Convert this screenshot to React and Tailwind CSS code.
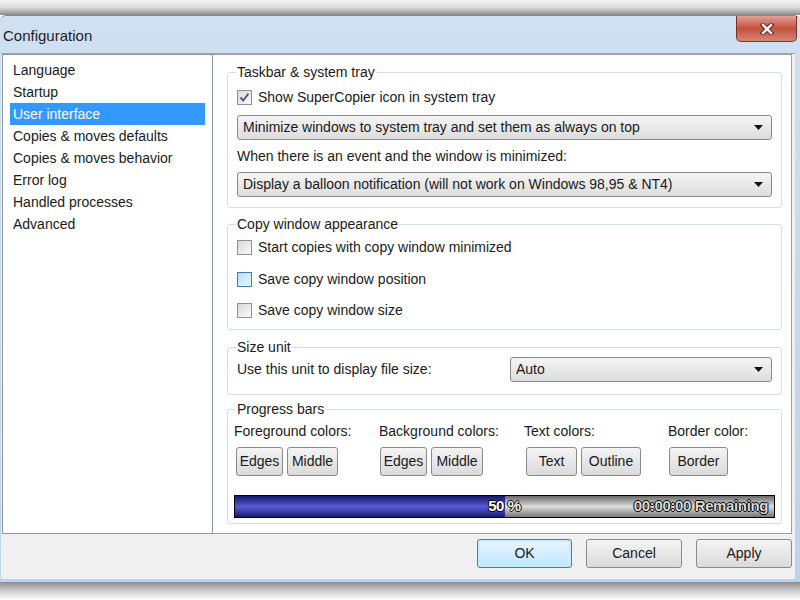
import React from 'react';

const menu = [
  'Language',
  'Startup',
  'User interface',
  'Copies & moves defaults',
  'Copies & moves behavior',
  'Error log',
  'Handled processes',
  'Advanced',
];

const outlineDark = '[text-shadow:-1px_0_#000,1px_0_#000,0_-1px_#000,0_1px_#000]';

function CheckBox({ checked, hover }) {
  const box = hover
    ? 'border-[#3c7fb1] bg-linear-to-br from-[#b9def5] to-[#eaf6fd]'
    : 'border-[#8e8f8f] bg-linear-to-br from-[#d8d8d8] to-[#fbfbfb]';
  return (
    <span className={`w-[15px] h-[15px] border flex items-center justify-center shrink-0 ${box}`}>
      {checked && (
        <svg width="11" height="11" viewBox="0 0 11 11">
          <path d="M1.5 5.5 L4.2 8.5 L9.5 1.5" fill="none" stroke="#4d5b8c" strokeWidth="2" />
        </svg>
      )}
    </span>
  );
}

function Check({ label, checked, hover, className = '' }) {
  return (
    <div className={`flex items-center gap-[6px] h-[20px] ${className}`}>
      <CheckBox checked={checked} hover={hover} />
      <span>{label}</span>
    </div>
  );
}

function Select({ value, className = '' }) {
  return (
    <div
      className={`flex items-center justify-between h-[25px] border border-[#8a8a8a] rounded-[3px] bg-linear-to-b from-[#f5f5f5] to-[#dddddd] pl-[5px] pr-[8px] ${className}`}
    >
      <span className="truncate">{value}</span>
      <svg width="9" height="5" viewBox="0 0 9 5" className="shrink-0">
        <path d="M0 0 H9 L4.5 5 Z" fill="#111" />
      </svg>
    </div>
  );
}

function Btn({ children, className = '' }) {
  return (
    <button
      className={`h-[29px] border border-[#8a8a8a] rounded-[3px] bg-linear-to-b from-[#f4f4f4] to-[#dadada] text-[14px] text-[#1a1a1a] ${className}`}
    >
      {children}
    </button>
  );
}

function Group({ title, className = '', legend = '-ml-[1px]', children }) {
  return (
    <fieldset className={`border border-[#d6dde2] rounded-[3px] ml-[14px] mr-[9px] ${className}`}>
      <legend className={`px-[1px] leading-[16px] ${legend}`}>{title}</legend>
      {children}
    </fieldset>
  );
}

export default function App() {
  return (
    <div className="w-[800px] h-[600px] bg-white flex flex-col overflow-hidden font-['Liberation_Sans',Arial,sans-serif] text-[14px] text-[#1a1a1a]">
      <div className="h-[15px] bg-linear-to-b from-[#f6f6f6] via-[#dcdcdc] to-[#8c8c8c]" />

      <div className="h-[567px] flex flex-col bg-linear-to-b from-[#cfe0f2] to-[#bcd3ea] border-t border-[#7c8a99] rounded-t-[6px]">
        {/* title bar */}
        <div className="h-[37px] relative">
          <span className="absolute left-[3px] top-[9px] text-[15px] text-[#1e1e1e]">Configuration</span>
          <div className="absolute right-[3px] top-0 w-[61px] h-[26px] rounded-b-[5px] border border-[#7a3129] border-t-0 bg-linear-to-b from-[#e2a195] via-[#c5503f] to-[#d68676] flex items-center justify-center">
            <svg width="14" height="12" viewBox="0 0 14 12">
              <path d="M3 2 L11 10 M11 2 L3 10" stroke="#5a241c" strokeWidth="4.5" strokeLinecap="square" />
              <path d="M3 2 L11 10 M11 2 L3 10" stroke="#f4f0ee" strokeWidth="2.5" strokeLinecap="square" />
            </svg>
          </div>
        </div>

        {/* client area */}
        <div className="h-[526px] ml-[1px] mr-[5px] bg-[#f0f0f0] border-t border-[#9aa8b6] flex flex-col">
          <div className="h-[480px] flex ml-[1px] mr-[3px]">
            <div className="w-[211px] bg-white border border-[#8e959d] pt-[4px]">
              {menu.map((item) => (
                <div
                  key={item}
                  className={`h-[22px] flex items-center mx-[7px] px-[3px] ${
                    item === 'User interface' ? 'bg-[#3399ff] text-white' : ''
                  }`}
                >
                  {item}
                </div>
              ))}
            </div>

            <div className="flex-1 bg-white border border-l-0 border-[#a0a0a0] pt-[9px]">
              <Group title="Taskbar & system tray" className="px-[9px] pb-[10px]">
                <Check label="Show SuperCopier icon in system tray" checked className="mt-[7px]" />
                <Select value="Minimize windows to system tray and set them as always on top" className="mt-[8px] h-[24px]" />
                <div className="mt-[8px] leading-[16px]">When there is an event and the window is minimized:</div>
                <Select value="Display a balloon notification (will not work on Windows 98,95 & NT4)" className="mt-[8px]" />
              </Group>

              <Group title="Copy window appearance" className="mt-[8px] px-[9px] pb-[9px]">
                <Check label="Start copies with copy window minimized" className="mt-[5px]" />
                <Check label="Save copy window position" hover className="mt-[12px]" />
                <Check label="Save copy window size" className="mt-[11px]" />
              </Group>

              <Group title="Size unit" className="mt-[9px] px-[9px] pb-[12px]">
                <div className="mt-[2px] flex items-center justify-between">
                  <span>Use this unit to display file size:</span>
                  <Select value="Auto" className="w-[262px]" />
                </div>
              </Group>

              <Group title="Progress bars" className="mt-[6px] px-[6px] pb-[5px]" legend="ml-[2px]">
                <div className="mt-[6px] flex">
                  <div className="w-[145px]">
                    <div className="leading-[16px]">Foreground colors:</div>
                    <div className="mt-[8px] ml-[2px] flex gap-[4px]">
                      <Btn className="w-[47px]">Edges</Btn>
                      <Btn className="w-[51px]">Middle</Btn>
                    </div>
                  </div>
                  <div className="w-[145px]">
                    <div className="leading-[16px]">Background colors:</div>
                    <div className="mt-[8px] ml-[1px] flex gap-[4px]">
                      <Btn className="w-[47px]">Edges</Btn>
                      <Btn className="w-[52px]">Middle</Btn>
                    </div>
                  </div>
                  <div className="w-[144px]">
                    <div className="leading-[16px]">Text colors:</div>
                    <div className="mt-[8px] ml-[2px] flex gap-[4px]">
                      <Btn className="w-[51px]">Text</Btn>
                      <Btn className="w-[60px]">Outline</Btn>
                    </div>
                  </div>
                  <div>
                    <div className="leading-[16px]">Border color:</div>
                    <div className="mt-[8px] ml-[1px] flex">
                      <Btn className="w-[59px]">Border</Btn>
                    </div>
                  </div>
                </div>

                <div className="mt-[19px] h-[23px] border border-black relative flex">
                  <div className="w-1/2 bg-linear-to-b from-[#16166a] via-[#5a5ad2] to-[#1a1a72]" />
                  <div className="flex-1 bg-linear-to-b from-[#6a6a6a] via-[#dedede] to-[#777777]" />
                  <div className="absolute inset-0 flex items-center justify-center font-bold text-[15px] tracking-tight">
                    <span className={`text-white ${outlineDark}`}>50 %</span>
                  </div>
                  <div className="absolute inset-y-0 right-[6px] flex items-center font-bold text-[15px] tracking-tight">
                    <span className={`text-[#d8d8d8] ${outlineDark}`}>00:00:00 Remaining</span>
                  </div>
                </div>
              </Group>
            </div>
          </div>

          {/* bottom buttons */}
          <div className="flex-1 flex justify-end items-start pt-[5px] pr-[3px] gap-[14px]">
            <button className="w-[95px] h-[29px] rounded-[3px] border border-[#3c7fb1] bg-linear-to-b from-[#eaf6fd] to-[#bee6fd] shadow-[inset_0_0_0_2px_#c9ecff] text-[14px]">
              OK
            </button>
            <button className="w-[96px] h-[29px] rounded-[3px] border border-[#8a8a8a] bg-linear-to-b from-[#f4f4f4] to-[#dadada] text-[14px]">
              Cancel
            </button>
            <button className="w-[96px] h-[29px] rounded-[3px] border border-[#8a8a8a] bg-linear-to-b from-[#f4f4f4] to-[#dadada] text-[14px]">
              Apply
            </button>
          </div>
        </div>

        <div className="flex-1" />
      </div>

      <div className="flex-1 bg-linear-to-b from-[#8d8d8d] via-[#cfcfcf] to-white" />
    </div>
  );
}
